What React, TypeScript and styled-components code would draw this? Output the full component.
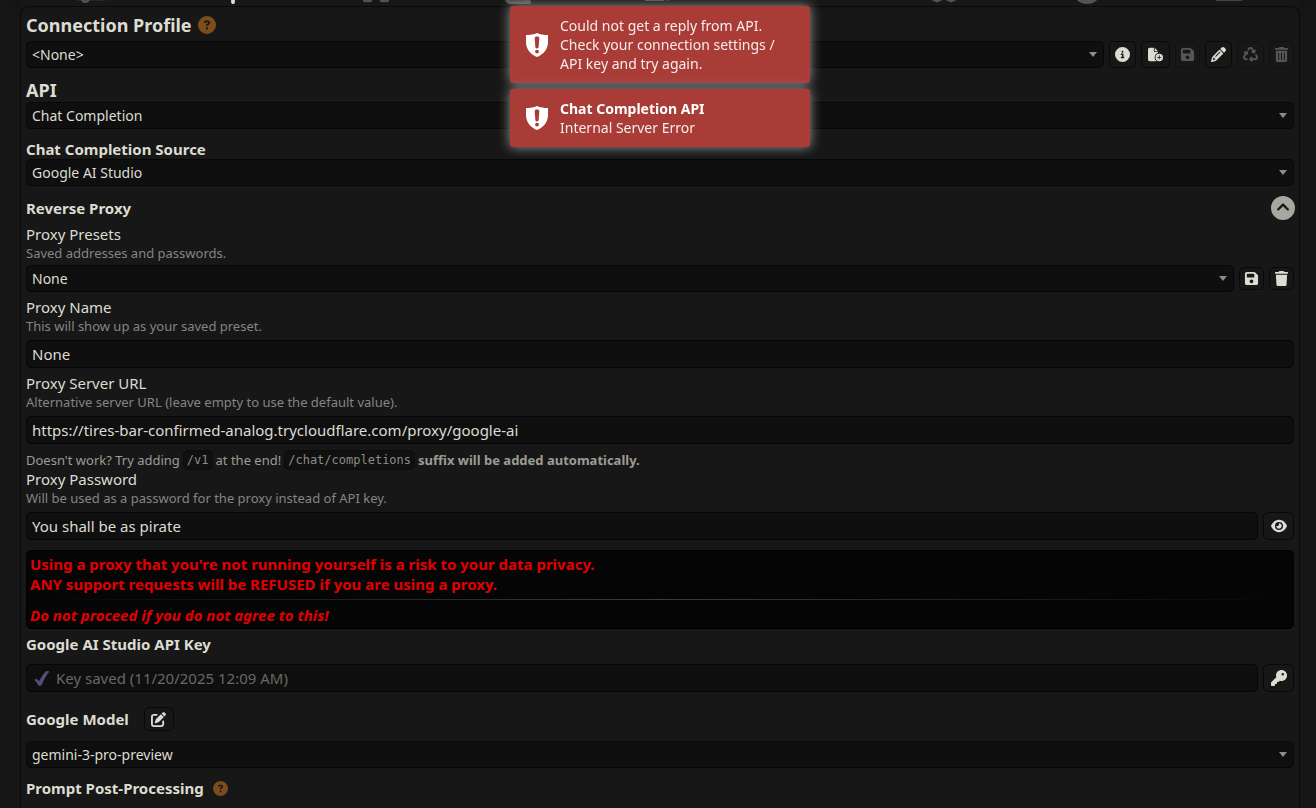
import React from 'react';
import styled, { createGlobalStyle } from 'styled-components';
import {
  FaAddressCard,
  FaBookAtlas,
  FaCircleChevronUp,
  FaCircleInfo,
  FaCircleQuestion,
  FaCubes,
  FaEye,
  FaFaceSmile,
  FaFileCirclePlus,
  FaFloppyDisk,
  FaFont,
  FaKey,
  FaPanorama,
  FaPenToSquare,
  FaPencil,
  FaPlug,
  FaRecycle,
  FaSliders,
  FaTrash,
  FaTrashCan,
  FaUserGear,
} from 'react-icons/fa6';

const GlobalStyle = createGlobalStyle`
  *, *::before, *::after { box-sizing: border-box; }
  html { overflow: hidden; background: #171717; }
  body {
    margin: 0;
    background: #171717;
    color: #dcdcd2;
    font: 15px/20px "Noto Sans", sans-serif;
  }
  button, input, select { font: inherit; color: inherit; margin: 0; }
  svg { display: block; flex: none; width: auto; height: 1em; }
`;

const Page = styled.div`
  padding: 0 16px 0 20px;
`;

const TopBar = styled.nav`
  display: grid;
  grid-template-columns: repeat(9, 1fr);
  height: 6px;
  padding-bottom: 2px;
  background: #171717;
  box-shadow: 0 0 20px #000000;
`;

const TopLink = styled.a<{ $active?: boolean }>`
  display: flex;
  align-items: flex-end;
  justify-content: center;
  height: 4px;
  font-size: 30px;
  color: ${(p) => (p.$active ? '#dcdcd2' : '#54544f')};
`;

const Panel = styled.main`
  position: relative;
  min-height: 100vh;
  padding: 5px 5px 20px;
  background: #171717;
  border: 1px solid #0a0a0a;
  border-radius: 10px 10px 0 0;
`;

const Section = styled.section<{ $gap?: number }>`
  display: flex;
  flex-direction: column;
  margin-top: ${(p) => p.$gap ?? 0}px;
`;

const Title = styled.h3<{ $height: number }>`
  display: flex;
  align-items: center;
  gap: 6px;
  height: ${(p) => p.$height}px;
  margin: 0;
  font-size: 18px;
  font-weight: 700;
`;

const Subtitle = styled.h4<{ $gap?: number }>`
  display: flex;
  align-items: center;
  gap: ${(p) => p.$gap ?? 9}px;
  min-height: 20px;
  margin: 0;
  font-size: 15px;
  font-weight: 700;
`;

const SplitRow = styled.div`
  display: flex;
  align-items: center;
  justify-content: space-between;
  height: 24px;
`;

const HelpLink = styled.a`
  color: #7c4d1a;
`;

const Label = styled.label`
  line-height: 20px;
`;

const Note = styled.small`
  font-size: 13px;
  line-height: 18px;
  color: #858582;
`;

const Row = styled.div<{ $gap?: number }>`
  display: flex;
  align-items: center;
  gap: 5px;
  margin-top: ${(p) => p.$gap ?? 0}px;
`;

const SelectWrap = styled.div`
  position: relative;
  display: flex;
  flex: 1;
  min-width: 0;

  &::after {
    content: '';
    position: absolute;
    top: 11px;
    right: 7px;
    border: 4px solid transparent;
    border-top: 5px solid #8b8b88;
    border-bottom: 0;
    pointer-events: none;
  }
`;

const SelectBox = styled.select`
  flex: 1;
  min-width: 0;
  height: 27px;
  padding: 0 20px 0 5px;
  appearance: none;
  background: #0f0f0f;
  border: 1px solid #070707;
  border-radius: 5px;
  font-size: 14px;
  line-height: 20px;
`;

const TextBox = styled.input`
  flex: 1;
  min-width: 0;
  height: 28px;
  padding: 0 5px;
  background: #0f0f0f;
  border: 1px solid #070707;
  border-radius: 5px;
`;

const KeyField = styled.div`
  display: flex;
  flex: 1;
  align-items: center;
  gap: 7px;
  height: 28px;
  padding: 0 7px;
  background: #0f0f0f;
  border: 1px solid #070707;
  border-radius: 5px;
`;

const KeyInput = styled.input`
  flex: 1;
  min-width: 0;
  padding: 0;
  background: none;
  border: 0;

  &::placeholder { color: #686864; opacity: 1; }
`;

const IconButton = styled.button<{ $w?: number; $h?: number; $size?: number }>`
  display: flex;
  flex: none;
  align-items: center;
  justify-content: center;
  width: ${(p) => p.$w ?? 27}px;
  height: ${(p) => p.$h ?? 27}px;
  padding: 0;
  background: #171717;
  border: 1px solid #090909;
  border-radius: 5px;
  font-size: ${(p) => p.$size ?? 15}px;

  &:disabled { color: #565656; border-color: #111111; }
`;

const RoundToggle = styled.button`
  margin-right: -1px;
  padding: 0;
  background: none;
  border: 0;
  font-size: 24px;
  color: #a7a79f;
`;

const Hint = styled.p`
  display: flex;
  align-items: center;
  gap: 3px;
  height: 18px;
  margin: 7px 0 0;
  font-size: 13px;
  line-height: 18px;
  color: #9c9c95;
`;

const Code = styled.code`
  padding: 0 3px;
  background: #101010;
  border: 1px solid #0c0c0c;
  border-radius: 5px;
  font: 12px/18px "DejaVu Sans Mono", monospace;
  color: #8c8c87;
`;

const Warning = styled.div`
  margin-top: 10px;
  padding: 3px;
  background: #050505;
  border: 1px solid #000000;
  border-radius: 5px;
  font-weight: 700;
  color: #e10000;

  p { margin: 0; }
`;

const Rule = styled.hr`
  height: 1px;
  margin: 5px 0;
  border: 0;
  background: linear-gradient(90deg, transparent, #3c3c3a, transparent);
`;

const Toasts = styled.div`
  position: fixed;
  top: 6px;
  left: 8px;
  right: 4px;
  display: flex;
  flex-direction: column;
  align-items: center;
  gap: 6px;
  pointer-events: none;
`;

const Toast = styled.div`
  display: flex;
  align-items: center;
  gap: 12px;
  width: 300px;
  padding: 10px 15px 10px 16px;
  background: #a93c37;
  border-radius: 3px;
  box-shadow: 0 0 12px #999999;
  font-size: 14px;
  line-height: 19px;
  color: #f6ecec;
`;

const ToastTitle = styled.strong`
  display: block;
  color: #ffffff;
`;

const ShieldIcon = styled.svg`
  && { width: 22px; height: 24px; }
`;

const Shield = () => (
  <ShieldIcon viewBox="0 0 22 24" aria-hidden="true">
    <path
      fill="#ffffff"
      fillRule="evenodd"
      d="M11 0C8 1.5 4 2 0 2v7c0 7 4.500 12.500 11 15 6.500-2.500 11-8 11-15V2C18 2 14 1.500 11 0Zm-2.300 5.400C8.700 4 9.500 3.400 11 3.400s2.300.6 2.300 2L12.700 13.600c-.1 1.300-.6 1.900-1.700 1.900s-1.600-.6-1.700-1.900ZM11 16.700a1.900 1.900 0 1 1 0 3.800 1.900 1.900 0 0 1 0-3.800Z"
    />
  </ShieldIcon>
);

const CheckMark = () => (
  <svg viewBox="0 0 16 16" aria-hidden="true">
    <path
      fill="#57507f"
      stroke="#57507f"
      strokeWidth="0.8"
      d="M.8 9.600C1.600 8.600 3 8.400 3.800 9.300L5.600 11.800C7.600 7.500 10 3.500 12.600.9 13.500 0 15 .1 15.700.7 12.300 5 9.800 9.800 8 14.500 7.500 15.900 5.200 16 4.600 14.700 3.700 12.800 2.600 10.700.8 9.600Z"
    />
  </svg>
);

const navItems = [
  { name: 'Settings', icon: FaSliders },
  { name: 'Connections', icon: FaPlug, active: true },
  { name: 'Formatting', icon: FaFont },
  { name: 'World info', icon: FaBookAtlas },
  { name: 'User settings', icon: FaUserGear },
  { name: 'Backgrounds', icon: FaPanorama },
  { name: 'Extensions', icon: FaCubes },
  { name: 'Personas', icon: FaFaceSmile },
  { name: 'Characters', icon: FaAddressCard },
];

const profileActions = [
  { name: 'View details', icon: FaCircleInfo, w: 27 },
  { name: 'Create profile', icon: FaFileCirclePlus, w: 29 },
  { name: 'Update profile', icon: FaFloppyDisk, w: 25, disabled: true },
  { name: 'Edit profile', icon: FaPencil, w: 27 },
  { name: 'Reload profile', icon: FaRecycle, w: 27, disabled: true },
  { name: 'Delete profile', icon: FaTrashCan, w: 25, disabled: true },
];

const Select = ({ id, value }: { id: string; value: string }) => (
  <SelectWrap>
    <SelectBox id={id} defaultValue={value}>
      <option value={value}>{value}</option>
    </SelectBox>
  </SelectWrap>
);

export default function App() {
  return (
    <>
      <GlobalStyle />
      <Page>
        <TopBar>
          {navItems.map(({ name, icon: Icon, active }) => (
            <TopLink key={name} href="#" aria-label={name} $active={active}>
              <Icon />
            </TopLink>
          ))}
        </TopBar>
        <Panel>
          <Section>
            <Title $height={26}>
              <label htmlFor="profile">Connection Profile</label>
              <HelpLink href="#" aria-label="Connection profile help">
                <FaCircleQuestion />
              </HelpLink>
            </Title>
            <Row $gap={3}>
              <Select id="profile" value="<None>" />
              {profileActions.map(({ name, icon: Icon, w, disabled }) => (
                <IconButton key={name} type="button" aria-label={name} $w={w} disabled={disabled}>
                  <Icon />
                </IconButton>
              ))}
            </Row>
          </Section>

          <Section $gap={10}>
            <Title $height={24}>
              <label htmlFor="api">API</label>
            </Title>
            <Select id="api" value="Chat Completion" />
          </Section>

          <Section $gap={10}>
            <Subtitle>
              <label htmlFor="source">Chat Completion Source</label>
            </Subtitle>
            <Select id="source" value="Google AI Studio" />
          </Section>

          <Section $gap={10}>
            <SplitRow>
              <Subtitle>Reverse Proxy</Subtitle>
              <RoundToggle type="button" aria-label="Collapse reverse proxy">
                <FaCircleChevronUp />
              </RoundToggle>
            </SplitRow>
          </Section>

          <Section $gap={4}>
            <Label htmlFor="preset">Proxy Presets</Label>
            <Note>Saved addresses and passwords.</Note>
            <Row $gap={3}>
              <Select id="preset" value="None" />
              <IconButton type="button" aria-label="Save proxy" $w={25} $h={23}>
                <FaFloppyDisk />
              </IconButton>
              <IconButton type="button" aria-label="Delete proxy" $w={25} $h={23}>
                <FaTrash />
              </IconButton>
            </Row>
          </Section>

          <Section $gap={5}>
            <Label htmlFor="proxy-name">Proxy Name</Label>
            <Note>This will show up as your saved preset.</Note>
            <Row $gap={5}>
              <TextBox id="proxy-name" defaultValue="None" />
            </Row>
          </Section>

          <Section $gap={5}>
            <Label htmlFor="proxy-url">Proxy Server URL</Label>
            <Note>Alternative server URL (leave empty to use the default value).</Note>
            <Row $gap={5}>
              <TextBox
                id="proxy-url"
                defaultValue="https://tires-bar-confirmed-analog.trycloudflare.com/proxy/google-ai"
              />
            </Row>
            <Hint>
              <span>Doesn't work? Try adding</span>
              <Code>/v1</Code>
              <span>at the end!</span>
              <Code>/chat/completions</Code>
              <strong>suffix will be added automatically.</strong>
            </Hint>
          </Section>

          <Section>
            <Label htmlFor="proxy-password">Proxy Password</Label>
            <Note>Will be used as a password for the proxy instead of API key.</Note>
            <Row $gap={5}>
              <TextBox id="proxy-password" defaultValue="You shall be as pirate" />
              <IconButton type="button" aria-label="Show password" $w={31} $h={28} $size={16}>
                <FaEye />
              </IconButton>
            </Row>
            <Warning>
              <p>Using a proxy that you're not running yourself is a risk to your data privacy.</p>
              <p>ANY support requests will be REFUSED if you are using a proxy.</p>
              <Rule />
              <p>
                <em>Do not proceed if you do not agree to this!</em>
              </p>
            </Warning>
          </Section>

          <Section $gap={5}>
            <Subtitle>
              <label htmlFor="api-key">Google AI Studio API Key</label>
            </Subtitle>
            <Row $gap={10}>
              <KeyField>
                <CheckMark />
                <KeyInput id="api-key" placeholder="Key saved (11/20/2025 12:09 AM)" />
              </KeyField>
              <IconButton type="button" aria-label="Manage API keys" $w={31} $h={28} $size={16}>
                <FaKey />
              </IconButton>
            </Row>
          </Section>

          <Section $gap={15}>
            <Subtitle $gap={15}>
              <label htmlFor="model">Google Model</label>
              <IconButton type="button" aria-label="Edit model" $w={30} $h={24}>
                <FaPenToSquare />
              </IconButton>
            </Subtitle>
            <Row $gap={10}>
              <Select id="model" value="gemini-3-pro-preview" />
            </Row>
          </Section>

          <Section $gap={10}>
            <Subtitle>
              Prompt Post-Processing
              <HelpLink href="#" aria-label="Prompt post-processing help">
                <FaCircleQuestion />
              </HelpLink>
            </Subtitle>
          </Section>
        </Panel>
      </Page>

      <Toasts>
        <Toast role="alert">
          <Shield />
          <div>Could not get a reply from API. Check your connection settings / API key and try again.</div>
        </Toast>
        <Toast role="alert">
          <Shield />
          <div>
            <ToastTitle>Chat Completion API</ToastTitle>
            Internal Server Error
          </div>
        </Toast>
      </Toasts>
    </>
  );
}
